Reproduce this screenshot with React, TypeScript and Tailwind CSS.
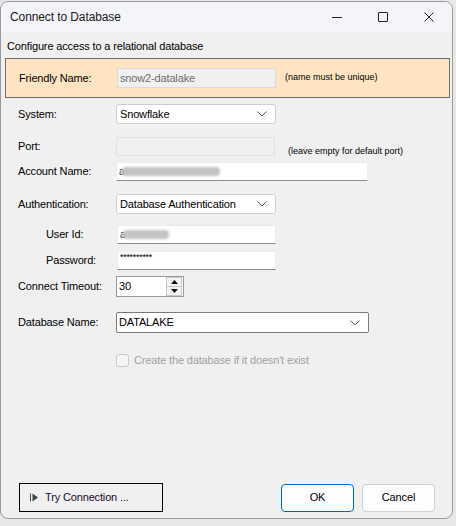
import React from 'react';

const Chevron = () => (
  <svg width="10" height="6" viewBox="0 0 10 6" className="shrink-0">
    <polyline points="0.5,0.5 5,5 9.5,0.5" fill="none" stroke="#5a5a5a" strokeWidth="1" />
  </svg>
);

const Combo: React.FC<{ value: string; w: string }> = ({ value, w }) => (
  <div className={`${w} h-[20px] bg-white border border-[#cfcfcf] rounded-[3px] flex items-center pl-[3px] pr-[8px]`}>
    <span className="flex-1 text-black">{value}</span>
    <Chevron />
  </div>
);

const TextBox: React.FC<{ w: string; children?: React.ReactNode }> = ({ w, children }) => (
  <div className={`${w} h-[19px] bg-white border border-[#ececec] border-b-[#8c8c8c] flex items-center pl-[2px] overflow-hidden`}>
    {children}
  </div>
);

const Blur: React.FC<{ w: string }> = ({ w }) => (
  <div className="flex items-center">
    <span className="text-[#333] text-[10px]">a</span>
    <div className={`${w} h-[9px] bg-[#c4c4c4] blur-[1px] rounded-sm -ml-[2px]`} />
  </div>
);

const App: React.FC = () => {
  return (
    <div
      className="w-[456px] h-[526px] bg-[#e8e8e8] overflow-hidden pt-[1px] text-[11px] tracking-[-0.15px] text-black"
      style={{ fontFamily: '"Liberation Sans", Arial, sans-serif' }}
    >
      <div className="w-[453px] h-[518px] border border-[#9a9a9a] rounded-[8px] overflow-hidden flex flex-col bg-[#f0f0f0]">
        {/* Title bar */}
        <div className="h-[30px] bg-[#f4f5f8] flex items-center shrink-0">
          <span className="pl-[9px] text-[12px] tracking-[-0.1px] flex-1 text-[#1a1a1a]">Connect to Database</span>
          <div className="w-[46px] h-[30px] flex items-center justify-center">
            <div className="w-[10px] h-[1px] bg-[#222]" />
          </div>
          <div className="w-[46px] h-[30px] flex items-center justify-center">
            <div className="w-[10px] h-[10px] border border-[#222] rounded-[1px]" />
          </div>
          <div className="w-[46px] h-[30px] flex items-center justify-center">
            <svg width="10" height="10" viewBox="0 0 10 10">
              <path d="M0.5 0.5 L9.5 9.5 M9.5 0.5 L0.5 9.5" stroke="#222" strokeWidth="1" />
            </svg>
          </div>
        </div>

        {/* Body */}
        <div className="flex-1 flex flex-col">
          <div className="pl-[6px] pt-[7px] h-[21px] leading-[14px]">Configure access to a relational database</div>

          <div className="ml-[4px] mt-[5px] w-[445px] h-[40px] bg-[#ffe4c4] border border-[#6e6e6e] flex items-center pl-[13px]">
            <span className="w-[98px]">Friendly Name:</span>
            <div className="w-[159px] h-[20px] bg-[#f0f0f0] border border-[#dadada] flex items-center pl-[2px] text-[#6d6d6d]">
              snow2-datalake
            </div>
            <span className="ml-[9px] text-[9px] tracking-normal">(name must be unique)</span>
          </div>

          <div className="pl-[17px]">
            <div className="flex items-center mt-[6px]">
              <span className="w-[98px]">System:</span>
              <Combo value="Snowflake" w="w-[160px]" />
            </div>

            <div className="flex items-start mt-[13px]">
              <span className="w-[98px] h-[19px] flex items-center">Port:</span>
              <div className="w-[159px] h-[19px] bg-[#f0f0f0] border border-[#e2e2e2]" />
              <span className="ml-[13px] mt-[8px] leading-[12px] text-[9px] tracking-normal">(leave empty for default port)</span>
            </div>

            <div className="flex items-center mt-[5px]">
              <span className="w-[98px]">Account Name:</span>
              <TextBox w="w-[252px]">
                <Blur w="w-[98px]" />
              </TextBox>
            </div>

            <div className="flex items-center mt-[13px]">
              <span className="w-[98px]">Authentication:</span>
              <Combo value="Database Authentication" w="w-[160px]" />
            </div>

            <div className="flex items-center mt-[11px]">
              <span className="w-[71px] ml-[28px]">User Id:</span>
              <TextBox w="w-[159px]">
                <Blur w="w-[46px]" />
              </TextBox>
            </div>

            <div className="flex items-center mt-[7px]">
              <span className="w-[71px] ml-[28px]">Password:</span>
              <TextBox w="w-[159px]">
                <span className="text-[9px] leading-[9px] -mt-[6px] tracking-[-0.3px]">**********</span>
              </TextBox>
            </div>

            <div className="flex items-center mt-[6px]">
              <span className="w-[98px]">Connect Timeout:</span>
              <div className="w-[68px] h-[21px] bg-white border border-[#9a9a9a] flex items-center">
                <span className="flex-1 pl-[2px]">30</span>
                <div className="w-[16px] h-[19px] flex flex-col mr-[1px]">
                  <div className="flex-1 bg-[#f4f4f4] border border-[#c8c8c8] flex items-center justify-center">
                    <svg width="7" height="4" viewBox="0 0 7 4"><polygon points="3.5,0 7,4 0,4" fill="#111" /></svg>
                  </div>
                  <div className="flex-1 bg-[#f4f4f4] border border-t-0 border-[#c8c8c8] flex items-center justify-center">
                    <svg width="7" height="4" viewBox="0 0 7 4"><polygon points="0,0 7,0 3.5,4" fill="#111" /></svg>
                  </div>
                </div>
              </div>
            </div>

            <div className="flex items-center mt-[15px]">
              <span className="w-[98px]">Database Name:</span>
              <div className="w-[253px] h-[21px] bg-white border border-[#7a7a7a] rounded-[2px] flex items-center pl-[2px] pr-[8px]">
                <span className="flex-1">DATALAKE</span>
                <Chevron />
              </div>
            </div>

            <div className="flex items-center mt-[19px] ml-[98px]">
              <div className="w-[13px] h-[13px] border border-[#cacaca] rounded-[3px] bg-[#f5f5f5]" />
              <span className="ml-[5px] text-[#a0a0a0]">Create the database if it doesn't exist</span>
            </div>
          </div>

          {/* Buttons */}
          <div className="mt-auto mb-[6px] flex items-center pl-[18px] pr-[17px]">
            <div className="w-[144px] h-[29px] border border-black flex items-center pl-[10px]">
              <svg width="8" height="9" viewBox="0 0 8 9" className="shrink-0">
                <rect x="0" y="0.5" width="1" height="8" fill="#444" />
                <polygon points="2.5,0.5 8,4.5 2.5,8.5" fill="#444" />
              </svg>
              <span className="ml-[7px] text-[#1a0a2a]">Try Connection ...</span>
            </div>
            <div className="flex-1" />
            <div className="w-[73px] h-[28px] bg-[#fdfdfd] border border-[#0067c0] rounded-[4px] flex items-center justify-center">OK</div>
            <div className="w-[73px] h-[28px] ml-[8px] bg-[#fdfdfd] border border-[#d0d0d0] rounded-[4px] flex items-center justify-center">Cancel</div>
          </div>
        </div>
      </div>
    </div>
  );
};

export default App;
